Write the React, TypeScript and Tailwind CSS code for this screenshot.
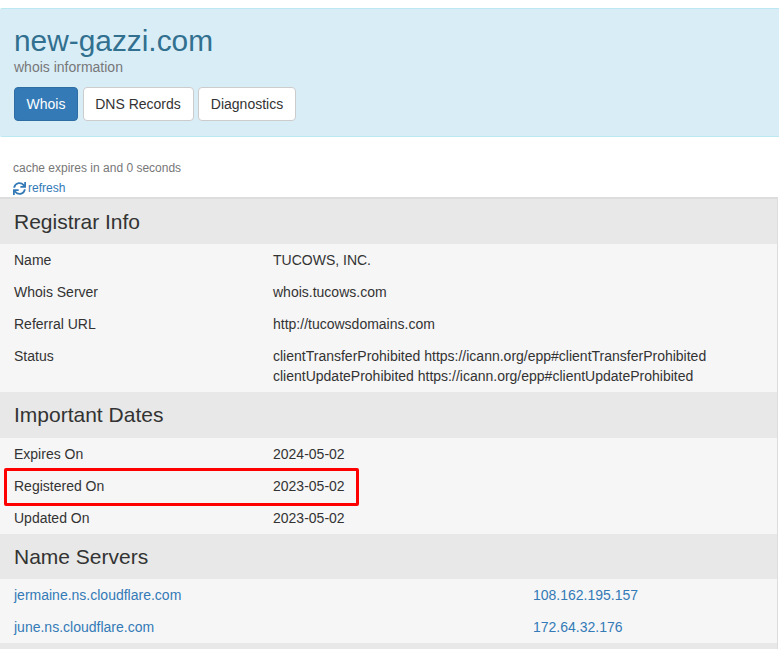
import React from "react";
import { FaSync } from "react-icons/fa";

const Heading = ({ title }: any) => (
    <h3 className="h-[45.4px] bg-[#e7e8e7] px-[14px] pt-[9.8px] text-[21px] leading-[26px] text-[#333]">{title}</h3>
)

const Row = ({ label, children }: any) => (
    <div className="flex px-[14px] py-[6px] leading-[20px]">
        <div className="w-[259px] shrink-0">{label}</div>
        <div>{children}</div>
    </div>
)

const ServerRow = ({ name, ip }: any) => (
    <div className="flex px-[14px] py-[6px] leading-[20px] text-[#337ab7]">
        <a className="w-[519px] shrink-0" href="#">{name}</a>
        <a href="#">{ip}</a>
    </div>
)

export default function App() {
    return (
        <div className="relative h-[649px] overflow-hidden bg-white pt-[8px] text-[14px] text-[#333] font-['Liberation_Sans',Arial,sans-serif]">
            <div className="h-[129px] rounded-l-[2px] border-y border-[#bce8f1] bg-[#d9edf7] px-[14px] pt-[15px]">
                <h1 className="text-[29.85px] leading-[33px] text-[#31708f]">new-gazzi.com</h1>
                <p className="mt-[2px] text-[14px] leading-[17px] text-[#777]">whois information</p>
                <div className="mt-[11px] flex gap-[4.5px]">
                    <button className="h-[34px] w-[64px] rounded-[4px] border border-[#2e6da4] bg-[#337ab7] text-white">Whois</button>
                    <button className="h-[34px] w-[111px] rounded-[4px] border border-[#ccc] bg-white text-[#333]">DNS Records</button>
                    <button className="h-[34px] w-[98px] rounded-[4px] border border-[#ccc] bg-white text-[#333]">Diagnostics</button>
                </div>
            </div>
            <div className="px-[13px] pt-[23px] text-[12px] leading-[17px] text-[#777]">
                <p>cache expires in and 0 seconds</p>
                <a className="mt-[3px] flex items-center gap-[2px] text-[#337ab7]" href="#">
                    <FaSync className="h-[13px] w-[13px]" />
                    refresh
                </a>
            </div>
            <div className="w-[778px] border-t-2 border-r border-[#ddd] bg-[#f6f6f6]">
                <Heading title="Registrar Info" />
                <Row label="Name">TUCOWS, INC.</Row>
                <Row label="Whois Server">whois.tucows.com</Row>
                <Row label="Referral URL">http://tucowsdomains.com</Row>
                <Row label="Status">
                    clientTransferProhibited https://icann.org/epp#clientTransferProhibited<br />
                    clientUpdateProhibited https://icann.org/epp#clientUpdateProhibited
                </Row>
                <Heading title="Important Dates" />
                <Row label="Expires On">2024-05-02</Row>
                <Row label="Registered On">2023-05-02</Row>
                <Row label="Updated On">2023-05-02</Row>
                <Heading title="Name Servers" />
                <ServerRow name="jermaine.ns.cloudflare.com" ip="108.162.195.157" />
                <ServerRow name="june.ns.cloudflare.com" ip="172.64.32.176" />
                <div className="h-[6px] bg-[#e7e8e7]"></div>
            </div>
            <div className="absolute left-[4px] top-[468px] h-[38px] w-[355px] rounded-[2px] border-[3px] border-[#ff0000]"></div>
        </div>
    )
}
